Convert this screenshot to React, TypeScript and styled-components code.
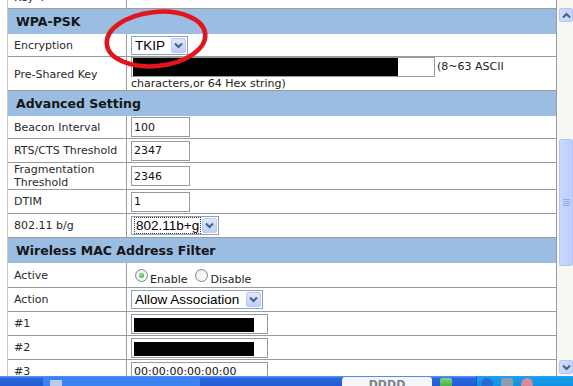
import React from 'react';
import styled, { createGlobalStyle } from 'styled-components';

const LINE = '#9b9b9b';
const HEAD = '#9bbde2';

const GlobalStyle = createGlobalStyle`
  html, body { margin: 0; padding: 0; background: #fff; overflow: hidden; }
  #root { width: 573px; height: 386px; }
`;

const Screen = styled.div`
  position: relative;
  width: 573px;
  height: 386px;
  display: grid;
  grid-template-rows: 376px 10px;
  overflow: hidden;
  font-family: "DejaVu Sans", Verdana, sans-serif;
`;

const Viewport = styled.div`
  display: flex;
  min-height: 0;
  overflow: hidden;
`;

const Page = styled.div`
  flex: 0 0 557px;
  box-sizing: border-box;
  padding-left: 7px;
  overflow: hidden;
  background: #fff;
`;

const Table = styled.div`
  box-sizing: border-box;
  width: 550px;
  margin-top: -13px;
  border-left: 1px solid #c9c9c9;
  border-right: 1px solid ${LINE};
`;

const Row = styled.div<{ $h: number }>`
  display: grid;
  grid-template-columns: 119px 1fr;
  height: ${(p) => p.$h}px;
  box-sizing: border-box;
  border-bottom: 1px solid ${LINE};
`;

const SectionHeader = styled.div`
  height: 25px;
  box-sizing: border-box;
  display: flex;
  align-items: center;
  padding-left: 8px;
  background: ${HEAD};
  font-weight: bold;
  font-size: 12.5px;
  color: #151515;
`;

const Label = styled.div`
  display: flex;
  align-items: center;
  padding-left: 6px;
  border-right: 1px solid ${LINE};
  font-size: 11px;
  line-height: 13px;
  color: #2a2a2a;
`;

const Value = styled.div`
  display: flex;
  align-items: center;
  padding-left: 4px;
  font-size: 11px;
  color: #222;
`;

const WrapValue = styled.div`
  padding: 0 3px 0 4px;
  font-size: 11px;
  line-height: 14px;
  color: #222;
`;

const TextBox = styled.span<{ $w: number }>`
  display: inline-flex;
  align-items: center;
  width: ${(p) => p.$w}px;
  height: 20px;
  box-sizing: border-box;
  border: 1px solid #9a9a9a;
  background: #fff;
  padding: 0 2px;
  font-size: 11px;
  color: #111;
`;

const MaskedBox = styled.span<{ $w: number }>`
  display: inline-flex;
  align-items: stretch;
  vertical-align: middle;
  width: ${(p) => p.$w}px;
  height: 20px;
  box-sizing: border-box;
  border: 1px solid #9a9a9a;
  background: #fff;
  padding: 3px 2px 1px 2px;
  margin-right: 2px;
`;

const KeyBox = styled(MaskedBox)`
  padding: 0 1px;
`;

const Redaction = styled.span<{ $w: number }>`
  display: block;
  width: ${(p) => p.$w}px;
  background: #000;
`;

const Select = styled.span<{ $w: number }>`
  display: inline-flex;
  align-items: center;
  justify-content: space-between;
  width: ${(p) => p.$w}px;
  height: 19px;
  box-sizing: border-box;
  border: 1px solid #8ea1bd;
  background: #fff;
  padding: 0 1px 0 3px;
  font-family: "Liberation Sans", Arial, sans-serif;
  font-size: 13.5px;
  color: #000;
`;

const FocusText = styled.span`
  outline: 1px dotted #333;
  padding: 0 1px;
  line-height: 15px;
`;

const ArrowButton = styled.span`
  display: flex;
  align-items: center;
  justify-content: center;
  width: 15px;
  height: 15px;
  box-sizing: border-box;
  border: 1px solid #b9cbf3;
  border-radius: 2px;
  background: linear-gradient(#dfe8fd, #bccff8);
`;

const RadioGroup = styled.div`
  display: flex;
  align-items: center;
  gap: 4px;
`;

const RadioOption = styled.label`
  display: inline-flex;
  align-items: center;
  gap: 2px;
`;

const Radio = styled.span<{ $checked?: boolean }>`
  position: relative;
  display: inline-block;
  width: 13px;
  height: 13px;
  box-sizing: border-box;
  margin-left: 4px;
  border-radius: 50%;
  border: 1px solid #7b8794;
  background: radial-gradient(circle at 60% 60%, #ffffff 0, #eceef0 70%, #d8dce0 100%);
  &::after {
    content: '';
    display: ${(p) => (p.$checked ? 'block' : 'none')};
    position: absolute;
    left: 3px;
    top: 3px;
    width: 5px;
    height: 5px;
    border-radius: 50%;
    background: radial-gradient(circle at 40% 40%, #9be39b, #2f9f2f);
  }
`;

const RadioText = styled.span`
  margin-top: 9px;
  line-height: 13px;
`;

const Hint = styled.span``;

const Scrollbar = styled.div`
  flex: 1;
  display: flex;
  flex-direction: column;
  box-sizing: border-box;
  padding: 8px 0 2px 2px;
  background: #f7f7f3;
`;

const ScrollButton = styled.div`
  display: flex;
  align-items: center;
  justify-content: center;
  width: 14px;
  height: 14px;
  box-sizing: border-box;
  border: 1px solid #b4c7f2;
  border-radius: 2px;
  background: linear-gradient(90deg, #cfdcfc, #c2d3fb);
`;

const Thumb = styled(ScrollButton)`
  height: 127px;
  margin-top: 117px;
  background: linear-gradient(90deg, #c9d8fd, #bccffb);
`;

const Spacer = styled.div`
  flex: 1;
`;

const Taskbar = styled.div`
  display: flex;
  background: linear-gradient(#4f8ff3 0, #4f8ff3 1px, #2b66dc 2px, #245bd5 100%);
  overflow: hidden;
`;

const TaskSlot = styled.div<{ $w: number }>`
  flex: 0 0 ${(p) => p.$w}px;
  display: flex;
  align-items: flex-start;
`;

const TaskButton = styled.div<{ $w: number; $active?: boolean }>`
  flex: 0 0 ${(p) => p.$w}px;
  display: flex;
  align-items: flex-start;
  justify-content: ${(p) => (p.$active ? 'center' : 'flex-start')};
  padding: ${(p) => (p.$active ? '2px 0 0 0' : '3px 0 0 7px')};
  box-sizing: border-box;
  margin-top: 1px;
  border-radius: 3px 3px 0 0;
  background: ${(p) => (p.$active ? '#f4f6fb' : '#3d82f2')};
  font-family: "DejaVu Sans", sans-serif;
  font-weight: bold;
  font-size: 11px;
  line-height: 12px;
  color: #7a7f88;
`;

const TaskIcon = styled.span`
  display: block;
  width: 12px;
  height: 8px;
  background: #b9cdea;
`;

const Tray = styled.div`
  flex: 1;
  display: flex;
  align-items: flex-start;
  gap: 8px;
  padding: 2px 0 0 4px;
  border-left: 1px solid #1a5fb0;
  background: linear-gradient(#2fa0f2 0, #169be9 2px, #1391e4 100%);
`;

const TrayIcon = styled.span<{ $color: string; $round?: boolean }>`
  display: block;
  width: 12px;
  height: 12px;
  border-radius: ${(p) => (p.$round ? '50%' : '2px')};
  background: ${(p) => p.$color};
`;

const GreenIcon = styled.span`
  display: block;
  width: 12px;
  height: 10px;
  margin: 2px 0 0 8px;
  border-radius: 2px;
  background: linear-gradient(#7fd67f, #3aa93a);
`;

const Overlay = styled.svg`
  position: absolute;
  left: 0;
  top: 0;
  pointer-events: none;
`;

const Chevron = ({ up }: { up?: boolean }) => (
  <svg width="9" height="7" viewBox="0 0 9 7">
    <path
      d={up ? 'M1 5.5 L4.5 2 L8 5.5' : 'M1 1.5 L4.5 5 L8 1.5'}
      fill="none"
      stroke="#4a5e8a"
      strokeWidth="2"
    />
  </svg>
);

const Grip = () => (
  <svg width="7" height="8" viewBox="0 0 7 8">
    {[0, 2, 4, 6].map((y) => (
      <line key={y} x1="0" x2="7" y1={y + 0.5} y2={y + 0.5} stroke="#8eaaf0" strokeWidth="1" />
    ))}
  </svg>
);

const Dropdown = ({ w, children }: { w: number; children: React.ReactNode }) => (
  <Select $w={w}>
    {children}
    <ArrowButton>
      <Chevron />
    </ArrowButton>
  </Select>
);

export default function App() {
  return (
    <Screen>
      <GlobalStyle />
      <Viewport>
        <Page>
          <Table>
            <Row $h={22}>
              <Label>Key 4</Label>
              <Value />
            </Row>
            <SectionHeader>WPA-PSK</SectionHeader>
            <Row $h={23}>
              <Label>Encryption</Label>
              <Value>
                <Dropdown w={57}>TKIP</Dropdown>
              </Value>
            </Row>
            <Row $h={34}>
              <Label>Pre-Shared Key</Label>
              <WrapValue>
                <KeyBox $w={304}>
                  <Redaction $w={265} />
                </KeyBox>
                <Hint>(8~63 ASCII characters,or 64 Hex string)</Hint>
              </WrapValue>
            </Row>
            <SectionHeader>Advanced Setting</SectionHeader>
            <Row $h={23}>
              <Label>Beacon Interval</Label>
              <Value>
                <TextBox $w={59}>100</TextBox>
              </Value>
            </Row>
            <Row $h={24}>
              <Label>RTS/CTS Threshold</Label>
              <Value>
                <TextBox $w={59}>2347</TextBox>
              </Value>
            </Row>
            <Row $h={27}>
              <Label>
                Fragmentation
                <br />
                Threshold
              </Label>
              <Value>
                <TextBox $w={59}>2346</TextBox>
              </Value>
            </Row>
            <Row $h={24}>
              <Label>DTIM</Label>
              <Value>
                <TextBox $w={59}>1</TextBox>
              </Value>
            </Row>
            <Row $h={24}>
              <Label>802.11 b/g</Label>
              <Value>
                <Dropdown w={88}>
                  <FocusText>802.11b+g</FocusText>
                </Dropdown>
              </Value>
            </Row>
            <SectionHeader>Wireless MAC Address Filter</SectionHeader>
            <Row $h={25}>
              <Label>Active</Label>
              <Value>
                <RadioGroup>
                  <RadioOption>
                    <Radio $checked />
                    <RadioText>Enable</RadioText>
                  </RadioOption>
                  <RadioOption>
                    <Radio />
                    <RadioText>Disable</RadioText>
                  </RadioOption>
                </RadioGroup>
              </Value>
            </Row>
            <Row $h={24}>
              <Label>Action</Label>
              <Value>
                <Dropdown w={132}>Allow Association</Dropdown>
              </Value>
            </Row>
            <Row $h={24}>
              <Label>#1</Label>
              <Value>
                <MaskedBox $w={137}>
                  <Redaction $w={120} />
                </MaskedBox>
              </Value>
            </Row>
            <Row $h={24}>
              <Label>#2</Label>
              <Value>
                <MaskedBox $w={137}>
                  <Redaction $w={120} />
                </MaskedBox>
              </Value>
            </Row>
            <Row $h={24}>
              <Label>#3</Label>
              <Value>
                <TextBox $w={137}>00:00:00:00:00:00</TextBox>
              </Value>
            </Row>
          </Table>
        </Page>
        <Scrollbar>
          <ScrollButton>
            <Chevron up />
          </ScrollButton>
          <Thumb>
            <Grip />
          </Thumb>
          <Spacer />
          <ScrollButton>
            <Chevron />
          </ScrollButton>
        </Scrollbar>
      </Viewport>
      <Taskbar>
        <TaskSlot $w={43} />
        <TaskButton $w={157}>
          <TaskIcon />
        </TaskButton>
        <TaskSlot $w={142} />
        <TaskButton $w={90} $active>
          DDDD
        </TaskButton>
        <TaskSlot $w={44}>
          <GreenIcon />
        </TaskSlot>
        <Tray>
          <TrayIcon $color="#2a6ad8" $round />
          <TrayIcon $color="#8c9bb0" />
          <TrayIcon $color="#d98a9a" $round />
        </Tray>
      </Taskbar>
      <Overlay width="573" height="386" viewBox="0 0 573 386">
        <ellipse
          cx="156"
          cy="39"
          rx="49.5"
          ry="27"
          transform="rotate(-6 156 39)"
          fill="none"
          stroke="#e2141c"
          strokeWidth="4.5"
        />
      </Overlay>
    </Screen>
  );
}
